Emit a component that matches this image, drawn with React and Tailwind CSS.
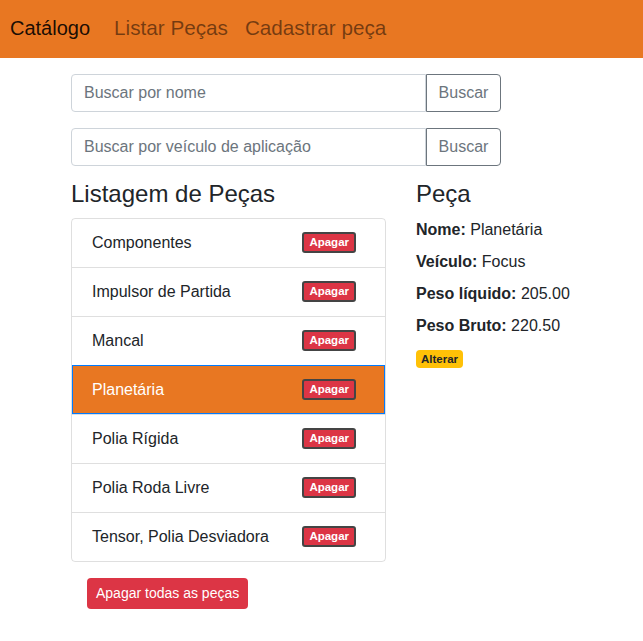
import { useState } from "react";

const PECAS = [
  "Componentes",
  "Impulsor de Partida",
  "Mancal",
  "Planetária",
  "Polia Rígida",
  "Polia Roda Livre",
  "Tensor, Polia Desviadora",
];

const SearchBar = ({ placeholder }) => (
  <div className="flex w-[430px] h-[38px]">
    <input
      placeholder={placeholder}
      className="flex-1 min-w-0 border border-[#ced4da] rounded-l-[4px] px-3 text-base text-[#495057] placeholder:text-[#6c757d] outline-none"
    />
    <button className="w-[75px] border border-[#6c757d] rounded-r-[4px] text-[#6c757d] text-base bg-white">
      Buscar
    </button>
  </div>
);

export default function App() {
  const [selected, setSelected] = useState(3);

  return (
    <div className="min-h-[641px] bg-white text-[#212529] text-base" style={{ fontFamily: '"Liberation Sans", Arial, sans-serif' }}>
      {/* Navbar */}
      <nav className="h-[58px] bg-[#e87722] flex items-center px-[10px] pb-[2px] text-[20px]">
        <span className="text-black/90 mr-6">Catálogo</span>
        <a className="text-black/50 text-[20.7px] mr-[17px]">Listar Peças</a>
        <a className="text-black/50 text-[20.7px]">Cadastrar peça</a>
      </nav>

      <div className="pl-[71px] pt-4">
        <div className="flex flex-col gap-4">
          <SearchBar placeholder="Buscar por nome" />
          <SearchBar placeholder="Buscar por veículo de aplicação" />
        </div>

        <div className="flex gap-[30px] mt-[14px]">
          {/* List column */}
          <div className="w-[315px]">
            <h4 className="text-[24px] leading-[1.2] mb-[9px]">Listagem de Peças</h4>
            <ul className="border border-black/[0.125] rounded-[4px]">
              {PECAS.map((p, i) => (
                <li
                  key={p}
                  onClick={() => setSelected(i)}
                  className={`flex items-center justify-between pl-5 pr-[29px] cursor-pointer
                    ${i > 0 ? "h-[49px] border-t border-black/[0.125]" : "h-[48px]"}
                    ${selected === i ? "bg-[#e87722] text-white outline outline-1 outline-[#007bff] -outline-offset-1" : ""}`}
                >
                  <span>{p}</span>
                  <button className="h-[21px] px-[5px] bg-[#dc3545] text-white text-[11.5px] font-bold rounded-[3px] border-2 border-[#444] leading-none">
                    Apagar
                  </button>
                </li>
              ))}
            </ul>
            <button className="ml-4 mt-4 h-[31px] px-[9px] bg-[#dc3545] text-white text-sm rounded-[4px]">
              Apagar todas as peças
            </button>
          </div>

          {/* Details column */}
          <div>
            <h4 className="text-[24px] leading-[1.2] mb-[9px]">Peça</h4>
            <p className="leading-6 mb-2"><b>Nome:</b> Planetária</p>
            <p className="leading-6 mb-2"><b>Veículo:</b> Focus</p>
            <p className="leading-6 mb-2"><b>Peso líquido:</b> 205.00</p>
            <p className="leading-6 mb-2"><b>Peso Bruto:</b> 220.50</p>
            <span className="inline-flex items-center h-[18px] px-[5px] bg-[#ffc107] text-[#212529] text-[11.5px] font-bold rounded-[4px]">
              Alterar
            </span>
          </div>
        </div>
      </div>
    </div>
  );
}
